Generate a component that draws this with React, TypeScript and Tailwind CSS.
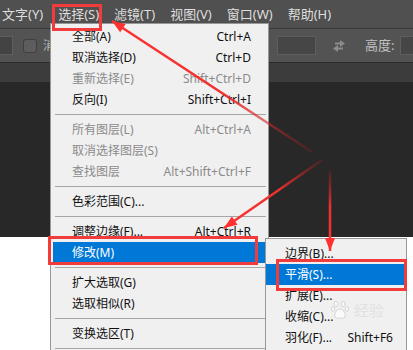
import React from "react";

type Row = { t: string; k?: string; off?: boolean; on?: boolean } | null;

const mainMenu: Row[] = [
  { t: "全部(A)", k: "Ctrl+A" },
  { t: "取消选择(D)", k: "Ctrl+D" },
  { t: "重新选择(E)", k: "Shift+Ctrl+D", off: true },
  { t: "反向(I)", k: "Shift+Ctrl+I" },
  null,
  { t: "所有图层(L)", k: "Alt+Ctrl+A", off: true },
  { t: "取消选择图层(S)", off: true },
  { t: "查找图层", k: "Alt+Shift+Ctrl+F", off: true },
  null,
  { t: "色彩范围(C)..." },
  null,
  { t: "调整边缘(F)...", k: "Alt+Ctrl+R" },
  { t: "修改(M)", on: true },
  null,
  { t: "扩大选取(G)" },
  { t: "选取相似(R)" },
  null,
  { t: "变换选区(T)" },
  null,
];

const subMenu: Row[] = [
  { t: "边界(B)..." },
  { t: "平滑(S)...", on: true },
  { t: "扩展(E)..." },
  { t: "收缩(C)..." },
  { t: "羽化(F)...", k: "Shift+F6" },
];

const MenuRow = ({ row, sub }: { row: Row; sub?: boolean }) => {
  if (!row) {
    return (
      <div className="h-[9px] flex items-center ml-[4px] mr-[2px]">
        <div className="w-full border-t border-[#a6a6a6]"></div>
      </div>
    );
  }
  const color = row.on ? "bg-[#0078d7] text-white" : row.off ? "text-[#8b8b8b]" : "text-[#111]";
  return (
    <div
      className={`h-[21px] leading-[21px] flex items-center justify-between whitespace-nowrap ${
        sub ? "pl-[19px] pr-[13px]" : "mx-[2px] pl-[19px] pr-[15px]"
      } ${color}`}
    >
      <span>{row.t}</span>
      {row.k && <span>{row.k}</span>}
    </div>
  );
};

const arrowHead = (x1: number, y1: number, x2: number, y2: number) => {
  const len = Math.hypot(x2 - x1, y2 - y1);
  const dx = (x2 - x1) / len;
  const dy = (y2 - y1) / len;
  const bx = x2 - dx * 13;
  const by = y2 - dy * 13;
  const w = 5;
  return `${x2},${y2} ${bx - dy * w},${by + dx * w} ${bx + dy * w},${by - dx * w}`;
};

const arrows = [
  { id: "a1", x1: 312, y1: 152, x2: 112, y2: 21 },
  { id: "a2", x1: 322, y1: 160, x2: 224, y2: 228 },
  { id: "a3", x1: 330, y1: 170, x2: 330, y2: 251 },
];

const App = () => {
  return (
    <div className="relative w-[413px] h-[350px] overflow-hidden bg-white [font-family:'Noto_Sans','Noto_Sans_CJK_SC',sans-serif] text-[12px] leading-none">
      {/* menu bar */}
      <div className="h-[28px] bg-[#505050] flex items-center gap-[15px] pl-[2px] text-[13px] text-[#dedede] whitespace-nowrap">
        <span>文字(Y)</span>
        <span>选择(S)</span>
        <span>滤镜(T)</span>
        <span>视图(V)</span>
        <span>窗口(W)</span>
        <span>帮助(H)</span>
      </div>
      <div className="h-[1px] bg-[#393939]"></div>

      {/* options bar */}
      <div className="h-[33px] bg-[#535353] flex items-center overflow-hidden whitespace-nowrap">
        <div className="w-[277px] shrink-0 flex items-center">
          <div className="w-[13px] h-[19px] shrink-0 bg-[#434343] border border-l-0 border-[#5f5f5f]"></div>
          <div className="ml-[10px] w-[14px] h-[14px] shrink-0 rounded-[3px] bg-[#5d5d5d] border border-[#3e3e3e]"></div>
          <span className="ml-[6px] text-[#bdbdbd]">消</span>
        </div>
        <div className="w-[39px] h-[19px] shrink-0 bg-[#464646] border border-[#5e5e5e]"></div>
        <svg className="ml-[16px] shrink-0" width="14" height="14" viewBox="0 0 14 14">
          <path d="M3 4.5 H9" stroke="#8c8c8c" strokeWidth="2" />
          <polygon points="8,1 13,4.5 8,8" fill="#8c8c8c" />
          <path d="M5 9.5 H11" stroke="#8c8c8c" strokeWidth="2" />
          <polygon points="6,6 1,9.5 6,13" fill="#8c8c8c" />
        </svg>
        <span className="ml-[19px] shrink-0 text-[13px] text-[#c2c2c2]">高度:</span>
        <div className="ml-[6px] w-[40px] h-[19px] shrink-0 bg-[#464646] border border-[#5e5e5e]"></div>
      </div>
      <div className="h-[1px] bg-[#2b2b2b]"></div>
      <div className="h-[19px] bg-[#3c3c3c]"></div>
      <div className="h-[155px] bg-[#282828]"></div>

      {/* select menu */}
      <div className="absolute left-[50px] top-[23px] w-[219px] h-[340px] bg-[#f0f0f0] border border-[#979797] pt-[2px]">
        {mainMenu.map((r, i) => (
          <MenuRow key={i} row={r} />
        ))}
      </div>

      {/* modify submenu */}
      <div className="absolute left-[265px] top-[238px] w-[142px] h-[130px] bg-[#f0f0f0] border border-[#979797] pt-[4px]">
        {subMenu.map((r, i) => (
          <MenuRow key={i} row={r} sub />
        ))}
      </div>

      {/* watermark */}
      <div className="absolute left-[331px] top-[300px] flex items-center gap-[5px] opacity-70 pointer-events-none">
        <svg width="18" height="20" viewBox="0 0 18 20">
          <g fill="#ffffff" stroke="#c8c8c8" strokeWidth="1">
            <ellipse cx="5" cy="4" rx="2" ry="2.6" />
            <ellipse cx="12" cy="4" rx="2" ry="2.6" />
            <ellipse cx="2" cy="9" rx="1.8" ry="2.3" />
            <ellipse cx="16" cy="9" rx="1.8" ry="2.3" />
            <path d="M9 9 C5 9 3 15 4 17 C5 19 8 18 9 18 C10 18 13 19 14 17 C15 15 13 9 9 9 Z" />
          </g>
        </svg>
        <span className="text-[15px] text-[#dcdcdc]">经验</span>
      </div>

      {/* red boxes */}
      <div className="absolute left-[52px] top-[4px] w-[50px] h-[27px] border-[3px] border-[#f23b3b]"></div>
      <div className="absolute left-[48px] top-[236px] w-[210px] h-[29px] border-[3px] border-[#f23b3b]"></div>
      <div className="absolute left-[276px] top-[259px] w-[131px] h-[32px] border-[3px] border-[#f23b3b]"></div>

      {/* arrows */}
      <svg className="absolute left-0 top-0 pointer-events-none" width="413" height="350">
        <defs>
          {arrows.map((a) => (
            <linearGradient key={a.id} id={a.id} gradientUnits="userSpaceOnUse" x1={a.x1} y1={a.y1} x2={a.x2} y2={a.y2}>
              <stop offset="0" stopColor="#b02020" stopOpacity="0.2" />
              <stop offset="0.45" stopColor="#f03030" stopOpacity="1" />
              <stop offset="1" stopColor="#ff3030" stopOpacity="1" />
            </linearGradient>
          ))}
        </defs>
        {arrows.map((a) => (
          <g key={a.id}>
            <line x1={a.x1} y1={a.y1} x2={a.x2} y2={a.y2} stroke={`url(#${a.id})`} strokeWidth="2.5" />
            <polygon points={arrowHead(a.x1, a.y1, a.x2, a.y2)} fill="#ff3030" />
          </g>
        ))}
      </svg>
    </div>
  );
};

export default App;
